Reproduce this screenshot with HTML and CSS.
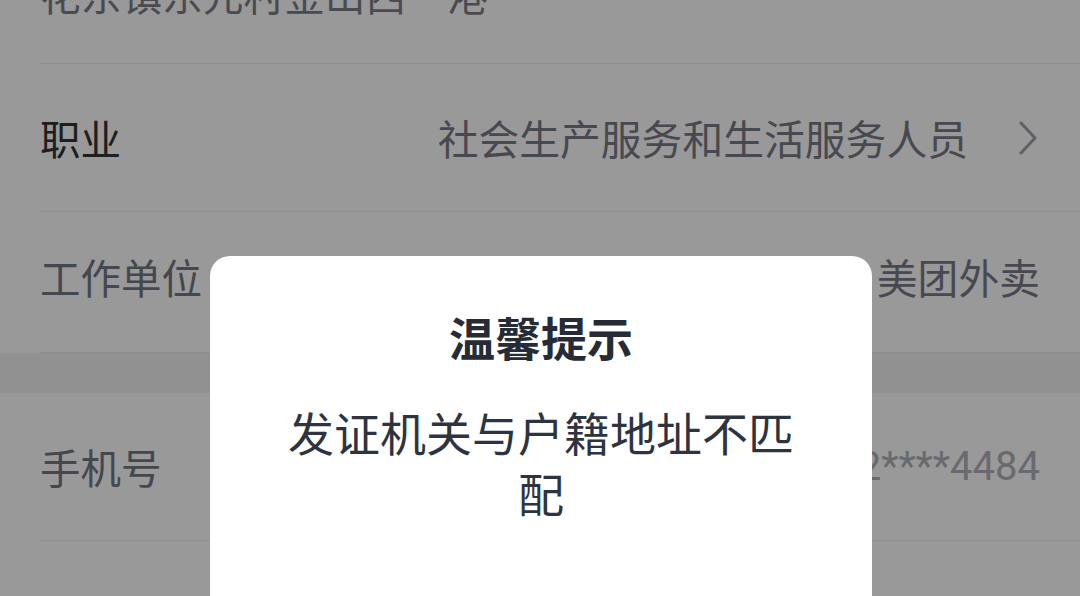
FILE: index.html
```html
<!DOCTYPE html>
<html lang="zh-CN">
<head>
<meta charset="utf-8">
<title>个人信息</title>
<link rel="stylesheet" href="styles.css">
</head>
<body>
<div class="page">
  <div class="addr-block">
    <div class="addr-text">花东镇东元村金山西一港</div>
  </div>
  <div class="row row-tall">
    <div class="label label-strong">职业</div>
    <div class="value-wrap">
      <span class="value">社会生产服务和生活服务人员</span>
      <svg class="chevron" width="20" height="34" viewBox="0 0 20 34"><polyline points="3,2 17,17 3,32" fill="none" stroke="#9ea0a8" stroke-width="3" stroke-linecap="round" stroke-linejoin="round"/></svg>
    </div>
  </div>
  <div class="row row-short">
    <div class="label">工作单位</div>
    <div class="value-wrap">
      <span class="value">美团外卖</span>
    </div>
  </div>
  <div class="band"></div>
  <div class="row row-tall">
    <div class="label">手机号</div>
    <div class="value-wrap">
      <span class="value phone">182****4484</span>
    </div>
  </div>
  <div class="row row-tall">
    <div class="label">紧急联系人</div>
    <div class="value-wrap">
      <span class="value">未填写</span>
    </div>
  </div>
</div>

<div class="mask"></div>
<div class="dialog">
  <div class="dialog-title">温馨提示</div>
  <div class="dialog-body">发证机关与户籍地址不匹配</div>
</div>
</body>
</html>
```

FILE: styles.css
```css
html, body {
  margin: 0;
  padding: 0;
  background: #ffffff;
}

body {
  width: 1080px;
  height: 596px;
  overflow: hidden;
  font-family: "Noto Sans CJK SC", "Noto Sans", sans-serif;
}

.page {
  display: flex;
  flex-direction: column;
}

.addr-block {
  box-sizing: content-box;
  height: 22px;
  margin-left: 40px;
  padding-bottom: 41px;
  display: flex;
  align-items: flex-end;
  border-bottom: 1px solid #ececec;
}

.addr-text {
  font-size: 40.7px;
  line-height: 56px;
  color: #7b7d88;
  white-space: nowrap;
}

.row {
  box-sizing: border-box;
  margin-left: 40px;
  padding-right: 40px;
  display: flex;
  align-items: center;
  justify-content: space-between;
  border-bottom: 1px solid #ececec;
  font-size: 40.5px;
  line-height: 56px;
}

.row-tall {
  height: 148px;
}

.row-short {
  height: 141px;
  padding-bottom: 10px;
}

.label {
  color: #747782;
  white-space: nowrap;
}

.label-strong {
  color: #333333;
}

.value-wrap {
  display: flex;
  align-items: center;
}

.value {
  color: #787a85;
  white-space: nowrap;
  font-size: 40.8px;
}

.phone {
  font-family: Roboto, "Noto Sans", sans-serif;
  font-size: 40px;
  color: #aeb1ba;
}

.chevron {
  display: block;
  margin-left: 50px;
  margin-right: 2px;
}

.band {
  height: 40px;
  background: #f2f2f2;
}

.mask {
  position: fixed;
  inset: 0;
  background: rgba(0, 0, 0, 0.4);
}

.dialog {
  position: fixed;
  left: 210px;
  top: 256px;
  width: 662px;
  height: 420px;
  box-sizing: border-box;
  background: #ffffff;
  border-radius: 20px;
  padding: 50px 64px 0;
  text-align: center;
}

.dialog-title {
  font-size: 46px;
  line-height: 60px;
  font-weight: 700;
  color: #262b36;
}

.dialog-body {
  margin-top: 35px;
  font-size: 46px;
  line-height: 61px;
  color: #2e3340;
}
```
